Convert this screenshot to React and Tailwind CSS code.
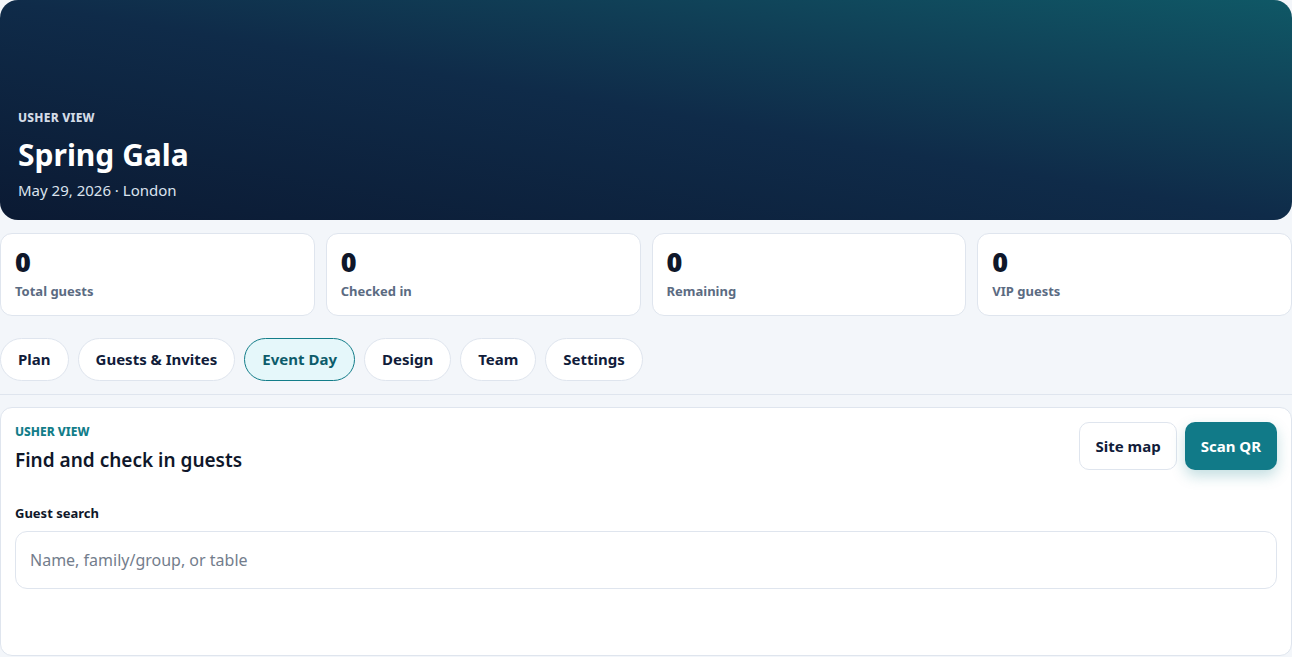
import React from 'react';

const font = { fontFamily: '"Noto Sans", "Open Sans", sans-serif' };

function StatCard({ value, label }) {
  return (
    <div className="flex-1 rounded-xl border border-[#dfe5ee] bg-white px-[14px] pt-[11px] pb-[14px]">
      <div className="text-[27px] font-black leading-[34px] text-[#0f172a]">{value}</div>
      <div className="mt-[2px] text-[13px] font-bold leading-[20px] text-[#5b6b82]">{label}</div>
    </div>
  );
}

function Tab({ label, active }) {
  const base = 'h-[43px] rounded-full border px-[17px] text-[15px] font-bold leading-none';
  return active ? (
    <button className={base + ' border-[#137d89] bg-[#e5f7fa] text-[#0d5c6b]'}>{label}</button>
  ) : (
    <button className={base + ' border-[#dfe5ee] bg-white text-[#111c3a]'}>{label}</button>
  );
}

export default function App() {
  const stats = [
    { label: 'Total guests', value: 0 },
    { label: 'Checked in', value: 0 },
    { label: 'Remaining', value: 0 },
    { label: 'VIP guests', value: 0 },
  ];
  const tabs = ['Plan', 'Guests & Invites', 'Event Day', 'Design', 'Team', 'Settings'];

  return (
    <div className="min-h-[657px] bg-[#f3f6fa]" style={font}>
      <header className="flex h-[220px] flex-col justify-end rounded-[18px] bg-linear-to-tr from-[#0b1a33] via-[#0f2b49] to-[#0f5866] px-[18px] pb-[20px]">
        <div className="text-[12px] font-extrabold uppercase leading-[16px] tracking-[0.02em] text-[#d3dbe6]">Usher view</div>
        <h1 className="mt-[9px] text-[30px] font-bold leading-[40px] text-white">Spring Gala</h1>
        <div className="mt-[5px] text-[15px] leading-[20px] text-[#dbe3ee]">May 29, 2026 · London</div>
      </header>

      <div className="mt-[13px] flex gap-[11px]">
        {stats.map((s) => (
          <StatCard key={s.label} value={s.value} label={s.label} />
        ))}
      </div>

      <nav className="mt-[22px] flex gap-[9px] border-b border-[#dfe5ee] pb-[13px]">
        {tabs.map((t) => (
          <Tab key={t} label={t} active={t === 'Event Day'} />
        ))}
      </nav>

      <section className="mt-[12px] h-[249px] rounded-xl border border-[#dfe5ee] bg-white px-[14px] pt-[14px]">
        <div className="flex items-start justify-between">
          <div className="pt-[2px]">
            <div className="text-[12px] font-extrabold uppercase leading-[16px] text-[#137d89]">Usher view</div>
            <h2 className="mt-[7px] text-[19px] font-semibold leading-[26px] text-[#0f172a]">Find and check in guests</h2>
          </div>
          <div className="flex gap-[8px]">
            <button className="h-[48px] rounded-[10px] border border-[#dfe5ee] bg-white px-[15px] text-[15px] font-bold text-[#111c3a]">Site map</button>
            <button className="h-[48px] rounded-[10px] bg-[#117a88] px-[16px] text-[15px] font-bold text-white shadow-[0_6px_14px_rgba(17,122,136,0.25)]">Scan QR</button>
          </div>
        </div>

        <label className="mt-[31px] block text-[13px] font-bold leading-[18px] text-[#0f172a]">Guest search</label>
        <input
          className="mt-[9px] h-[58px] w-full rounded-xl border border-[#dfe5ee] bg-white px-[14px] text-[16px] text-[#0f172a] outline-none placeholder:text-[#737d8c]"
          placeholder="Name, family/group, or table"
        />
      </section>
    </div>
  );
}
